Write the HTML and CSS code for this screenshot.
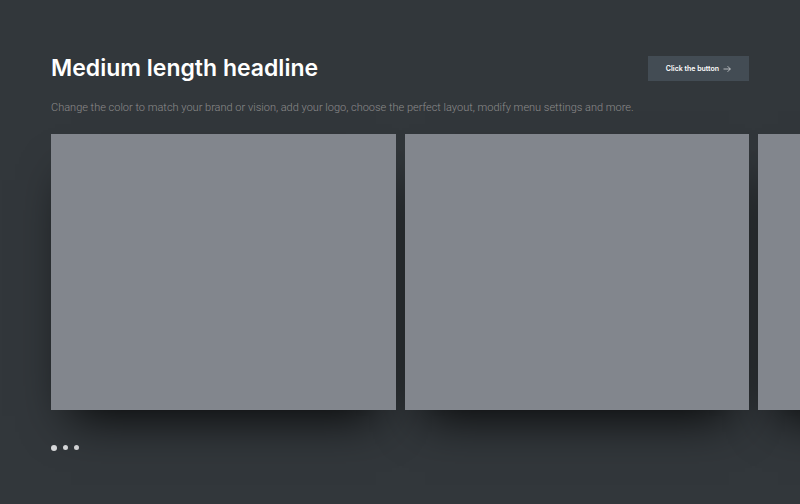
FILE: index.html
```html
<!DOCTYPE html>
<html lang="en">
<head>
<meta charset="utf-8">
<meta name="viewport" content="width=device-width, initial-scale=1">
<title>Medium length headline</title>
<link rel="stylesheet" href="styles.css">
</head>
<body>
<main class="section">
  <header class="header">
    <h1 class="headline">Medium length headline</h1>
    <button class="button" type="button">Click the button
      <svg class="arrow" viewBox="0 0 8 8" aria-hidden="true"><path d="M0.5 4H7.3M4.6 1.2L7.4 4L4.6 6.8"/></svg>
    </button>
  </header>
  <p class="intro">Change the color to match your brand or vision, add your logo, choose the perfect layout, modify menu settings and more.</p>
  <div class="carousel">
    <article class="slide"></article>
    <article class="slide"></article>
    <article class="slide"></article>
  </div>
  <nav class="dots" aria-label="Slides">
    <button class="dot dot-active" type="button" aria-label="Slide 1"></button>
    <button class="dot" type="button" aria-label="Slide 2"></button>
    <button class="dot" type="button" aria-label="Slide 3"></button>
  </nav>
</main>
</body>
</html>
```
FILE: styles.css
```css
* { box-sizing: border-box; }
body {
  margin: 0;
  background: #32373b;
  color: #fff;
  font-family: Inter, "Liberation Sans", sans-serif;
}
.section {
  padding: 52px 51px;
  overflow: hidden;
}
.header {
  display: flex;
  align-items: center;
  justify-content: space-between;
}
.headline {
  margin: 0;
  font-size: 23px;
  line-height: 32px;
  font-weight: 600;
}
.button {
  display: flex;
  align-items: center;
  justify-content: center;
  gap: 4px;
  height: 25px;
  padding: 1px 18px 0;
  border: 0;
  background: #434c54;
  color: #fff;
  font: 600 7px/10px Inter, "Liberation Sans", sans-serif;
}
.arrow {
  width: 8px;
  height: 8px;
  fill: none;
  stroke: currentColor;
  stroke-width: 0.6;
}
.intro {
  margin: 16px 0 18px;
  font-family: Roboto, sans-serif;
  font-size: 11px;
  font-weight: 300;
  line-height: 16px;
  color: #8c8b8b;
}
.carousel {
  position: relative;
  z-index: 0;
  display: flex;
  gap: 9px;
}
.slide {
  position: relative;
  flex: 0 0 calc((100% - 9px) / 2);
  aspect-ratio: 5 / 4;
  background: #82868d;
}
.slide::before {
  content: "";
  position: absolute;
  inset: 0;
  z-index: -1;
  box-shadow: 0 26px 46px -20px rgba(0, 0, 0, 0.9);
}
.dots {
  display: flex;
  align-items: center;
  gap: 6px;
  margin-top: 35px;
}
.dot {
  width: 5px;
  height: 5px;
  padding: 0;
  border: 0;
  border-radius: 50%;
  background: #dcdddf;
}
.dot-active { width: 6px; height: 6px; }
```
